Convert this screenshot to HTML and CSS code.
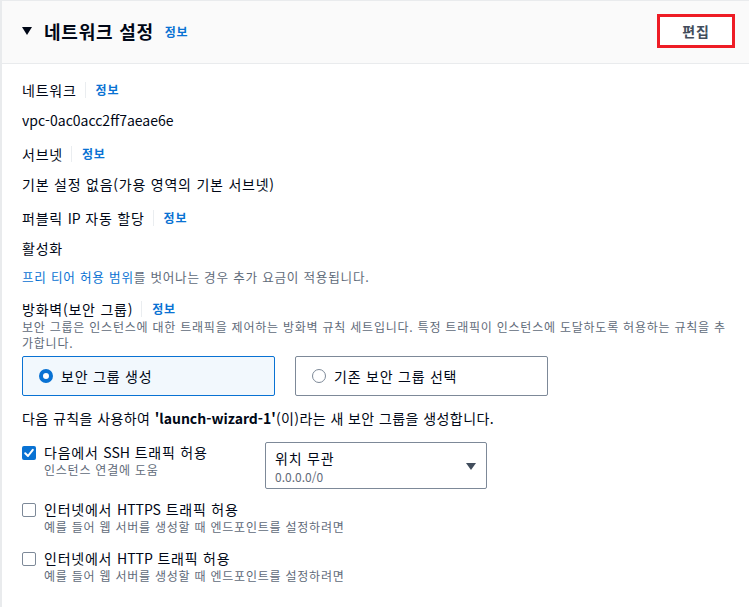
FILE: index.html
```html
<!DOCTYPE html>
<html lang="ko">
<head>
<meta charset="utf-8">
<title>네트워크 설정</title>
<link rel="stylesheet" href="styles.css">
</head>
<body>
<div class="panel">
  <div class="header">
    <div class="title-wrap">
      <span class="caret"></span>
      <h2 class="title">네트워크 설정</h2>
      <a class="info info-head" href="#">정보</a>
    </div>
    <button class="edit-btn">편집</button>
  </div>
  <div class="content">
    <div class="label-row"><span class="label">네트워크</span><span class="sep"></span><a class="info" href="#">정보</a></div>
    <div class="value en">vpc-0ac0acc2ff7aeae6e</div>

    <div class="label-row field-gap"><span class="label">서브넷</span><span class="sep"></span><a class="info" href="#">정보</a></div>
    <div class="value">기본 설정 없음(가용 영역의 기본 서브넷)</div>

    <div class="label-row field-gap"><span class="label">퍼블릭 <span class="en">IP</span> 자동 할당</span><span class="sep"></span><a class="info" href="#">정보</a></div>
    <div class="value">활성화</div>

    <div class="note"><a class="note-link" href="#">프리 티어 허용 범위</a>를 벗어나는 경우 추가 요금이 적용됩니다.</div>

    <div class="label-row fw-label"><span class="label">방화벽(보안 그룹)</span><span class="sep"></span><a class="info" href="#">정보</a></div>
    <div class="desc">
      <span class="desc-line">보안 그룹은 인스턴스에 대한 트래픽을 제어하는 방화벽 규칙 세트입니다. 특정 트래픽이 인스턴스에 도달하도록 허용하는 규칙을 추</span>
      <span class="desc-line">가합니다.</span>
    </div>

    <div class="cards">
      <div class="card card-selected"><span class="radio radio-on"></span><span>보안 그룹 생성</span></div>
      <div class="card"><span class="radio"></span><span>기존 보안 그룹 선택</span></div>
    </div>

    <div class="rule-text">다음 규칙을 사용하여 <b class="en">'launch-wizard-1'</b>(이)라는 새 보안 그룹을 생성합니다.</div>

    <div class="check-row ssh-row">
      <div class="check-left">
        <span class="checkbox checked">
          <svg viewBox="0 0 14 14" width="14" height="14"><path d="M3.2 7.2 L6 10 L10.8 3.8" fill="none" stroke="#fff" stroke-width="2" stroke-linecap="round" stroke-linejoin="round"/></svg>
        </span>
        <div class="check-text">
          <div class="check-label">다음에서 <span class="en">SSH</span> 트래픽 허용</div>
          <div class="check-sub">인스턴스 연결에 도움</div>
        </div>
      </div>
      <div class="select">
        <div class="select-text">
          <div class="select-main">위치 무관</div>
          <div class="select-sub en">0.0.0.0/0</div>
        </div>
        <span class="select-caret"></span>
      </div>
    </div>

    <div class="check-row https-row">
      <span class="checkbox"></span>
      <div class="check-text">
        <div class="check-label">인터넷에서 <span class="en">HTTPS</span> 트래픽 허용</div>
        <div class="check-sub">예를 들어 웹 서버를 생성할 때 엔드포인트를 설정하려면</div>
      </div>
    </div>

    <div class="check-row http-row">
      <span class="checkbox"></span>
      <div class="check-text">
        <div class="check-label">인터넷에서 <span class="en">HTTP</span> 트래픽 허용</div>
        <div class="check-sub">예를 들어 웹 서버를 생성할 때 엔드포인트를 설정하려면</div>
      </div>
    </div>
  </div>
</div>
</body>
</html>
```
FILE: styles.css
```css
* { box-sizing: border-box; }
html, body { margin: 0; padding: 0; background: #ffffff; }
body {
  font-family: "Noto Sans CJK KR", "Noto Sans", sans-serif;
  color: #000716;
  font-size: 14px;
  line-height: 22px;
  letter-spacing: 0.055em;
}
.en { letter-spacing: 0; }
.panel {
  border-top: 1px solid #e9ebed;
  border-left: 2px solid #e9ebed;
  min-height: 607px;
}
.header {
  height: 63px;
  padding: 0 14px 3px 20px;
  background: #fafafa;
  border-bottom: 1px solid #e9ebed;
  display: flex;
  align-items: center;
  justify-content: space-between;
}
.title-wrap { display: flex; align-items: center; }
.caret {
  width: 0; height: 0;
  border-left: 5px solid transparent;
  border-right: 5px solid transparent;
  border-top: 8px solid #000716;
  margin-right: 12px;
}
.title {
  margin: 0;
  font-size: 18px;
  font-weight: 700;
  line-height: 24px;
  color: #000716;
}
.info {
  color: #0972d3;
  font-size: 12px;
  font-weight: 700;
  text-decoration: none;
  line-height: 16px;
}
.info-head { margin-left: 11px; margin-top: 2px; }
.edit-btn {
  width: 78px;
  height: 34px;
  border: 3px solid #ee1c25;
  background: #ffffff;
  font-family: inherit;
  font-size: 14px;
  font-weight: 700;
  letter-spacing: 0.055em;
  color: #414d5c;
  padding: 0;
}
.content { padding: 15px 20px 0 20px; }
.label-row { display: flex; align-items: center; height: 22px; }
.label { font-size: 14px; }
.sep {
  width: 1px; height: 16px;
  background: #eaedf0;
  margin: 0 10px 0 8px;
}
.value { margin-top: 8px; height: 22px; }
.field-gap { margin-top: 12px; }
.note {
  margin-top: 8px;
  font-size: 12.6px;
  line-height: 20px;
  color: #5f6b7a;
}
.note-link { color: #0972d3; text-decoration: none; }
.fw-label { margin-top: 11px; }
.desc {
  font-size: 12px;
  line-height: 16px;
  color: #5f6b7a;
  margin-top: -1px;
}
.desc-line { display: block; white-space: nowrap; }
.cards { display: flex; gap: 20px; margin-top: 5px; }
.card {
  width: 253px;
  height: 40px;
  border: 1px solid #7d8998;
  border-radius: 2px;
  display: flex;
  align-items: center;
  padding-left: 16px;
  gap: 8px;
}
.card-selected { background: #f2f8fd; border-color: #0972d3; }
.radio {
  width: 14px; height: 14px;
  border-radius: 50%;
  border: 1.5px solid #7d8998;
  background: #fff;
  flex: none;
}
.radio-on { border: 4px solid #0972d3; }
.rule-text { margin-top: 11px; letter-spacing: 0.03em; }
.check-row { display: flex; align-items: flex-start; }
.ssh-row { margin-top: 12px; }
.https-row { margin-top: 9px; }
.http-row { margin-top: 13px; }
.check-left { display: flex; align-items: flex-start; width: 243px; }
.checkbox {
  width: 14px; height: 14px;
  margin-top: 5px;
  margin-right: 8px;
  border: 1.5px solid #7d8998;
  border-radius: 2px;
  flex: none;
  display: flex;
}
.checkbox.checked { background: #0972d3; border: none; }
.check-label { line-height: 22px; }
.check-sub { font-size: 12px; line-height: 14px; color: #5f6b7a; }
.select {
  width: 222px;
  height: 47px;
  margin-top: 1px;
  border: 1px solid #7d8998;
  border-radius: 2px;
  padding: 4px 10px 0 9px;
  display: flex;
  align-items: center;
  justify-content: space-between;
}
.select-text { align-self: flex-start; }
.select-main { line-height: 22px; }
.select-sub { font-size: 12px; line-height: 16px; color: #5f6b7a; }
.select-caret {
  width: 0; height: 0;
  border-left: 5px solid transparent;
  border-right: 5px solid transparent;
  border-top: 7px solid #414d5c;
  margin-top: -3px;
}
```
